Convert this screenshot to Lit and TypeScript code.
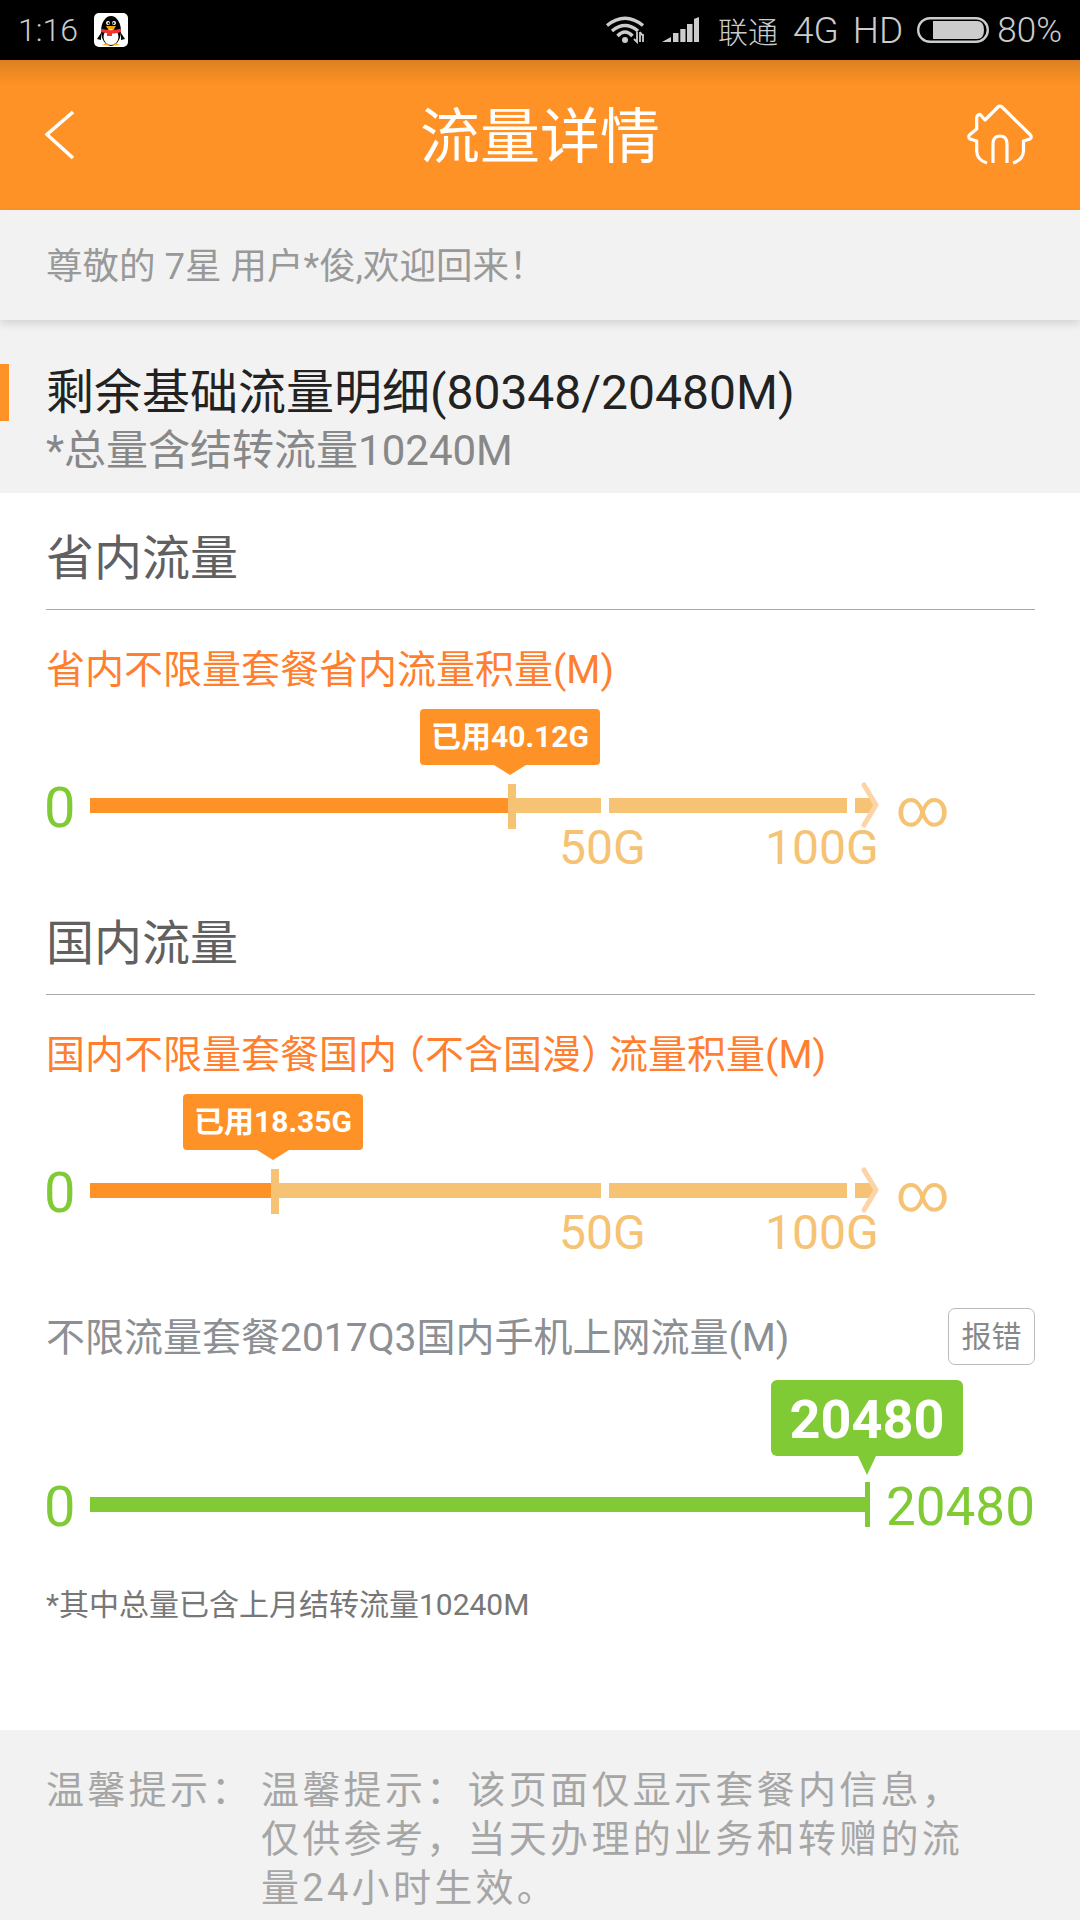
import { LitElement, html, css } from "lit";
import { customElement } from "lit/decorators.js";

const qq = html`<svg class="qq" viewBox="0 0 34 34" width="34" height="34">
  <rect width="34" height="34" rx="5" fill="#fff"/>
  <ellipse cx="17" cy="18" rx="10" ry="15" fill="#000"/>
  <ellipse cx="17" cy="24" rx="7.5" ry="8" fill="#fff"/>
  <path d="M7 20 L3 26 L7 27Z M27 20 L31 26 L27 27Z" fill="#000"/>
  <circle cx="14" cy="10" r="2" fill="#fff"/><circle cx="20" cy="10" r="2" fill="#fff"/>
  <circle cx="14.5" cy="10.3" r="1" fill="#000"/><circle cx="19.5" cy="10.3" r="1" fill="#000"/>
  <path d="M12 13 H22 L20 16 H14Z" fill="#f5a700"/>
  <path d="M7 15.5 Q17 19 27 15.5 V19 Q21 20.5 18 20.5 V23 H13 V20 Q10 20 7 19Z" fill="#ee3333"/>
  <path d="M8 32 L13 30 L15 32.5Z M26 32 L21 30 L19 32.5Z" fill="#f5a700"/>
</svg>`;

@customElement("usage-track")
class UsageTrack extends LitElement {
  static properties = { used: {}, pos: { type: Number } };
  used = "";
  pos = 0;
  static styles = css`
    :host { display: block; position: relative; height: 120px; font-family: Roboto, "Noto Sans CJK SC", sans-serif; }
    .zero { position: absolute; left: 44px; top: 3px; font-size: 56px; line-height: 60px; color: #80cb35; }
    .bar { position: absolute; left: 90px; top: 23px; height: 15px; width: 783px; background: #f5c373; }
    .fill { height: 100%; background: #ff9226; }
    .gap { position: absolute; top: 0; width: 8px; height: 15px; background: #fff; }
    .g1 { left: 511px; }
    .g2 { left: 757px; }
    .mark { position: absolute; top: -14px; width: 8px; height: 45px; background: #f5c373; }
    .chev { position: absolute; left: 860px; top: 7px; }
    .tip { position: absolute; top: -66px; width: 180px; height: 56px; border-radius: 4px; background: #ff9226; color: #fff;
      font-size: 30px; font-weight: 700; line-height: 56px; text-align: center; }
    .tip::after { content: ""; position: absolute; left: 50%; margin-left: -16px; bottom: -10px;
      border-left: 16px solid transparent; border-right: 16px solid transparent; border-top: 10px solid #ff9226; }
    .lbl { position: absolute; top: 46px; font-size: 48px; line-height: 54px; color: #f5c373; }
    .l50 { left: 559px; }
    .l100 { left: 765px; }
    .inf { position: absolute; left: 896px; top: 0; font-size: 52px; line-height: 68px; color: #f5c373; }
  `;
  render() {
    const left = this.pos;
    return html`
      <span class="zero">0</span>
      <div class="bar">
        <div class="fill" style="width:${left - 90}px"></div>
        <i class="gap g1"></i><i class="gap g2"></i>
        <i class="mark" style="left:${left - 90}px"></i>
      </div>
      <svg class="chev" width="24" height="50" viewBox="0 0 24 50"><path d="M4 3 L16 23 L4 43" fill="none" stroke="#fdd4a8" stroke-width="5" stroke-linecap="round" stroke-linejoin="round"/></svg>
      <div class="tip" style="left:${left - 88}px">${this.used}</div>
      <span class="lbl l50">50G</span>
      <span class="lbl l100">100G</span>
      <span class="inf">∞</span>
    `;
  }
}

@customElement("app-root")
class AppRoot extends LitElement {
  static styles = css`
    :host { display: block; width: 1080px; height: 1920px; overflow: hidden; background: #fff; position: relative;
      font-family: Roboto, "Noto Sans CJK SC", sans-serif; }
    .status { height: 60px; background: #000; color: #ccc; display: flex; align-items: center; padding: 0 18px; font-size: 35px; box-sizing: border-box; }
    .status .time { margin-right: 16px; font-weight: 300; font-size: 32px; }
    .status .right { margin-left: auto; display: flex; align-items: center; }
    .status .right span { font-weight: 300; }
    .status .cn { font-size: 30px; margin-right: 15px; }
    .status .m { margin-right: 14px; font-size: 37px; }
    .s1 { margin-right: 15px; }
    .s2 { margin-right: 18px; }
    .s3 { margin-right: 8px; }
    .head { height: 150px; background: linear-gradient(#dd7e20 0, #e88622 8px, #ff9226 26px); display: flex; align-items: center; justify-content: space-between; padding: 0 46px; position: relative; box-sizing: border-box; }
    .back { margin-left: -1px; }
    .home { margin-right: -1px; }
    .title { position: absolute; left: 0; right: 0; top: 34px; text-align: center; color: #fff; font-size: 60px; line-height: 88px; }
    .welcome { height: 110px; box-sizing: border-box; padding-left: 46px; background: #f2f2f2; color: #999; font-size: 36.5px; line-height: 114px; box-shadow: 0 4px 8px rgba(0,0,0,.12); position: relative; z-index: 1; }
    .remain { height: 173px; background: #f2f2f2; padding: 43px 0 0 46px; box-sizing: border-box; position: relative; }
    .accent { position: absolute; left: 0; top: 44px; width: 9px; height: 57px; background: #ff9226; }
    .r1 { font-size: 48px; line-height: 60px; color: #222; }
    .r2 { font-size: 42px; line-height: 56px; color: #888; }
    .section { padding: 0 45px 0 46px; height: 385px; box-sizing: border-box; }
    h2 { margin: 0; font-weight: 400; font-size: 48px; line-height: 131px; height: 116px; color: #606060; border-bottom: 1px solid #aaa; }
    .orange { margin-top: 35px; font-size: 39px; line-height: 50px; color: #ff7f2f; }
    .pl { font-feature-settings: "halt"; padding-left: 8.5px; }
    .pr { font-feature-settings: "halt"; padding-right: 8.5px; }
    usage-track { margin-left: -46px; margin-right: -45px; margin-top: 80px; }
    .q3 { display: flex; justify-content: space-between; align-items: center; padding: 0 45px 0 46px; height: 57px; margin-top: 45px; font-size: 39px; color: #8c8f93; }
    .q3 .lab { margin-bottom: 6px; }
    .btn { width: 87px; height: 57px; box-sizing: border-box; border: 1px solid #bbb; border-radius: 7px; font-size: 30px; line-height: 56px; text-align: center; color: #888; }
    .green { position: relative; height: 165px; }
    .gbar { position: absolute; left: 90px; top: 132px; width: 775px; height: 15px; background: #80cb35; }
    .gmark { position: absolute; left: 865px; top: 117px; width: 5px; height: 45px; background: #80cb35; }
    .gtip { position: absolute; left: 771px; top: 15px; width: 192px; height: 76px; background: #80cb35; border-radius: 6px; color: #fff; font-weight: 700; font-size: 54px; line-height: 80px; text-align: center; }
    .gtip::after { content: ""; position: absolute; left: 87px; bottom: -19px; border-left: 9px solid transparent; border-right: 9px solid transparent; border-top: 19px solid #80cb35; }
    .gz { position: absolute; left: 44px; top: 112px; font-size: 56px; line-height: 60px; color: #80cb35; }
    .gv { position: absolute; left: 886px; top: 112px; font-size: 53px; line-height: 60px; color: #80cb35; }
    .foot { padding-left: 46px; margin-top: 55px; font-size: 30px; line-height: 40px; color: #777; }
    .tips { position: absolute; left: 0; top: 1730px; width: 1080px; height: 190px; background: #f2f2f2; display: flex; padding: 36px 0 0 46px; box-sizing: border-box; color: #a6a6a6; font-size: 38px; line-height: 49px; letter-spacing: 3.3px; }
    .tips .k { width: 215px; flex: none; }
    .tips .v { width: 725px; }
  `;
  render() {
    return html`
      <div class="status">
        <span class="time">1:16</span>${qq}
        <div class="right">
          <svg class="s1" width="42" height="28" viewBox="0 0 42 28">
            <path d="M2 9.5 Q20 -5 38 9.5" fill="none" stroke="#ccc" stroke-width="3.4"/>
            <path d="M7 15 Q20 4 33 15" fill="none" stroke="#ccc" stroke-width="3.4"/>
            <path d="M12.5 20 Q20 12 27.5 20" fill="none" stroke="#ccc" stroke-width="3.4"/>
            <circle cx="20" cy="24" r="3" fill="#ccc"/>
            <path d="M32 16 V26 L29 23 M35 16 V26 M35 16 L38 20 M38 26 V18" fill="none" stroke="#ccc" stroke-width="1.8"/>
          </svg>
          <svg class="s2" width="38" height="26" viewBox="0 0 38 26">
            <path d="M0 25 L9 20 V25Z M11 16 H16.5 V25 H11Z M18.3 12 H23.5 V25 H18.3Z M25 7 H30.5 V25 H25Z M32 2 L37 0 V25 H32Z" fill="#ccc"/>
          </svg>
          <span class="cn">联通</span><span class="m">4G</span><span class="m">HD</span>
          <svg class="s3" width="72" height="26" viewBox="0 0 72 26">
            <rect x="1.2" y="1.2" width="69.6" height="23.6" rx="11.8" fill="none" stroke="#ccc" stroke-width="2.4"/>
            <path d="M16 4 H60 Q67 4 67 13 Q67 22 60 22 H16Z" fill="#ccc"/>
          </svg>
          <span>80%</span>
        </div>
      </div>
      <div class="head">
        <svg class="back" width="32" height="50" viewBox="0 0 32 50"><path d="M28 2 L2 24.5 L28 48" fill="none" stroke="#fff" stroke-width="3.6"/></svg>
        <div class="title">流量详情</div>
        <svg class="home" width="70" height="64" viewBox="0 0 70 64">
          <path d="M22 60 Q12 57 11.7 48 V38 L5 36 Q2.5 33.5 5 31.5 L11.7 26 V15 Q12 11.5 15 11.3 L20 17 L33 4 Q35 2 37 4 L65 31.5 Q67.5 34 65 36 L58.5 38 V48 Q58 57 48 60 M28 60 V41 Q28 33 35 33 Q42 33 42 41 V60" fill="none" stroke="#fff" stroke-width="3.2" stroke-linejoin="round"/>
        </svg>
      </div>
      <div class="welcome">尊敬的 7星 用户*俊,欢迎回来！</div>
      <div class="remain">
        <i class="accent"></i>
        <div class="r1">剩余基础流量明细(80348/20480M)</div>
        <div class="r2">*总量含结转流量10240M</div>
      </div>
      <div class="section">
        <h2>省内流量</h2>
        <div class="orange">省内不限量套餐省内流量积量(M)</div>
        <usage-track used="已用40.12G" pos="508"></usage-track>
      </div>
      <div class="section">
        <h2>国内流量</h2>
        <div class="orange">国内不限量套餐国内<span class="pl">（</span>不含国漫<span class="pr">）</span>流量积量(M)</div>
        <usage-track used="已用18.35G" pos="271"></usage-track>
      </div>
      <div class="q3"><span class="lab">不限流量套餐2017Q3国内手机上网流量(M)</span><span class="btn">报错</span></div>
      <div class="green">
        <span class="gz">0</span><i class="gbar"></i><i class="gmark"></i>
        <div class="gtip">20480</div>
        <span class="gv">20480</span>
      </div>
      <div class="foot">*其中总量已含上月结转流量10240M</div>
      <div class="tips">
        <div class="k">温馨提示：</div>
        <div class="v">温馨提示：该页面仅显示套餐内信息，仅供参考，当天办理的业务和转赠的流量24小时生效。</div>
      </div>
    `;
  }
}
